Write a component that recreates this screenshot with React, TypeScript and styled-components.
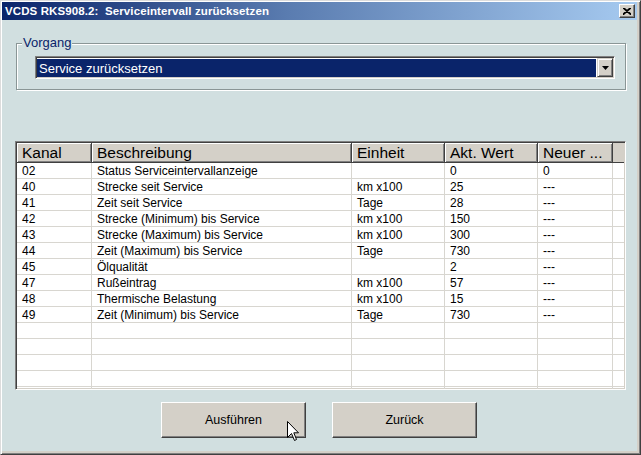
import React from "react";
import styled, { createGlobalStyle } from "styled-components";

const Global = createGlobalStyle`
  html, body { margin: 0; padding: 0; background: #d1dfe0; }
  body { width: 641px; height: 455px; overflow: hidden; font-family: "Liberation Sans", Arial, sans-serif; }
  * { box-sizing: border-box; }
`;

const Window = styled.div`
  position: relative;
  width: 641px;
  height: 455px;
  display: flex;
  flex-direction: column;
  border: 1px solid;
  border-color: #dcdcdc #404040 #404040 #dcdcdc;
  padding: 1px 3px 3px 1px;
  background: #d4d0c8;
  box-shadow: inset 1px 1px 0 #fff, inset -1px -1px 0 #808080;
`;

const TitleBar = styled.div`
  height: 18px;
  flex: none;
  display: flex;
  align-items: center;
  justify-content: space-between;
  padding: 0 2px 0 3px;
  background: linear-gradient(to right, #0a246a 0%, #5a7cb0 45%, #a6caf0 100%);
`;

const Title = styled.span`
  color: #fff;
  font-weight: bold;
  font-size: 11.5px;
  letter-spacing: 0.1px;
  white-space: nowrap;
`;

const CloseButton = styled.div`
  width: 16px;
  height: 14px;
  display: flex;
  align-items: center;
  justify-content: center;
  background: #d4d0c8;
  border: 1px solid;
  border-color: #fff #404040 #404040 #fff;
  box-shadow: inset -1px -1px 0 #808080;
`;

const Body = styled.div`
  flex: 1;
  display: flex;
  flex-direction: column;
  background: #d1dfe0;
  padding: 23px 12px 0 13px;
`;

const GroupBox = styled.div`
  position: relative;
  margin-left: 1px;
  width: 610px;
  height: 47px;
  border: 1px solid #8a9696;
  box-shadow: inset 1px 1px 0 #fff, 1px 1px 0 #fff;
  padding: 12px 0 0 18px;
`;

const Legend = styled.span`
  position: absolute;
  top: -9px;
  left: 5px;
  padding: 0 1px;
  background: #d1dfe0;
  color: #0a246a;
  font-size: 13px;
  line-height: 16px;
`;

const Combo = styled.div`
  width: 580px;
  height: 23px;
  display: flex;
  background: #fff;
  border: 1px solid;
  border-color: #808080 #fff #fff #808080;
  box-shadow: inset 1px 1px 0 #404040, inset -1px -1px 0 #d4d0c8;
  padding: 1px 1px 1px 1px;
`;

const ComboValue = styled.div`
  flex: 1;
  margin: 1px 1px 0 0;
  height: 18px;
  background: #0a246a;
  color: #fff;
  font-size: 13px;
  line-height: 19px;
  padding-left: 2px;
  white-space: nowrap;
`;

const DropButton = styled.div`
  width: 16px;
  height: 19px;
  flex: none;
  display: flex;
  align-items: center;
  justify-content: center;
  background: #d4d0c8;
  border: 1px solid;
  border-color: #d4d0c8 #404040 #404040 #d4d0c8;
  box-shadow: inset 1px 1px 0 #fff, inset -1px -1px 0 #808080;
`;

const Table = styled.div`
  margin-top: 51px;
  width: 611px;
  height: 249px;
  display: flex;
  flex-direction: column;
  overflow: hidden;
  background: #fff;
  border: 1px solid;
  border-color: #808080 #fff #fff #808080;
  box-shadow: inset 1px 1px 0 #404040, inset -1px -1px 0 #d4d0c8;
  padding: 1px;
`;

const COLS = "75px 260px 93px 93px 75px 1fr";

const HeaderRow = styled.div`
  display: grid;
  grid-template-columns: ${COLS};
  height: 20px;
  flex: none;
  background: #d4d0c8;
`;

const HeaderCell = styled.div<{ $filler?: boolean }>`
  display: flex;
  align-items: center;
  padding-left: 5px;
  font-size: 15.5px;
  color: #000;
  white-space: nowrap;
  overflow: hidden;
  background: #d4d0c8;
  ${(p) =>
    p.$filler
      ? `border-bottom: 1px solid #404040;`
      : `border-right: 1px solid #404040; border-bottom: 1px solid #404040;
         box-shadow: inset 1px 1px 0 #fff, inset -1px -1px 0 #808080;`}
`;

const Row = styled.div`
  display: grid;
  grid-template-columns: ${COLS};
  height: 16px;
  flex: none;
`;

const Cell = styled.div<{ $filler?: boolean }>`
  padding: 2px 0 0 5px;
  font-size: 12px;
  line-height: 13px;
  color: #000;
  white-space: nowrap;
  overflow: hidden;
  border-bottom: 1px solid #d8d6d0;
  border-right: ${(p) => (p.$filler ? "none" : "1px solid #d8d6d0")};
`;

const ButtonRow = styled.div`
  margin-top: 12px;
  display: flex;
  justify-content: center;
  gap: 26px;
  padding-right: 2px;
`;

const Button = styled.div`
  width: 145px;
  height: 36px;
  display: flex;
  align-items: center;
  justify-content: center;
  background: #d4d0c8;
  border: 1px solid;
  border-color: #fff #404040 #404040 #fff;
  box-shadow: inset -1px -1px 0 #808080;
  font-size: 12.5px;
  color: #000;
`;

const Cursor = styled.svg`
  position: absolute;
  left: 286px;
  top: 420px;
`;

const headers = ["Kanal", "Beschreibung", "Einheit", "Akt. Wert", "Neuer ..."];

const rows: string[][] = [
  ["02", "Status Serviceintervallanzeige", "", "0", "0"],
  ["40", "Strecke seit Service", "km x100", "25", "---"],
  ["41", "Zeit seit Service", "Tage", "28", "---"],
  ["42", "Strecke (Minimum) bis Service", "km x100", "150", "---"],
  ["43", "Strecke (Maximum) bis Service", "km x100", "300", "---"],
  ["44", "Zeit (Maximum) bis Service", "Tage", "730", "---"],
  ["45", "Ölqualität", "", "2", "---"],
  ["47", "Rußeintrag", "km x100", "57", "---"],
  ["48", "Thermische Belastung", "km x100", "15", "---"],
  ["49", "Zeit (Minimum) bis Service", "Tage", "730", "---"],
  ["", "", "", "", ""],
  ["", "", "", "", ""],
  ["", "", "", "", ""],
  ["", "", "", "", ""],
  ["", "", "", "", ""],
];

export default function App() {
  return (
    <>
      <Global />
      <Window>
        <TitleBar>
          <Title>VCDS RKS908.2:&nbsp; Serviceintervall zurücksetzen</Title>
          <CloseButton>
            <svg width="8" height="7" viewBox="0 0 8 7">
              <path d="M0 0 L8 7 M1 0 L8 6 M8 0 L0 7 M7 0 L0 6" stroke="#000" strokeWidth="1.2" fill="none" />
            </svg>
          </CloseButton>
        </TitleBar>
        <Body>
          <GroupBox>
            <Legend>Vorgang</Legend>
            <Combo>
              <ComboValue>Service zurücksetzen</ComboValue>
              <DropButton>
                <svg width="7" height="4" viewBox="0 0 7 4">
                  <path d="M0 0 H7 L3.5 4 Z" fill="#000" />
                </svg>
              </DropButton>
            </Combo>
          </GroupBox>
          <Table>
            <HeaderRow>
              {headers.map((h) => (
                <HeaderCell key={h}>{h}</HeaderCell>
              ))}
              <HeaderCell $filler />
            </HeaderRow>
            {rows.map((r, i) => (
              <Row key={i}>
                {r.map((c, j) => (
                  <Cell key={j}>{c}</Cell>
                ))}
                <Cell $filler />
              </Row>
            ))}
          </Table>
          <ButtonRow>
            <Button>Ausführen</Button>
            <Button>Zurück</Button>
          </ButtonRow>
        </Body>
        <Cursor width="13" height="21" viewBox="0 0 13 21">
          <path
            d="M0.5 0.5 L0.5 16.5 L4.5 12.5 L7.5 19.5 L9.5 18.5 L6.8 11.8 L11.5 11.8 Z"
            fill="#fff"
            stroke="#000"
            strokeWidth="1"
            strokeLinejoin="miter"
          />
        </Cursor>
      </Window>
    </>
  );
}
